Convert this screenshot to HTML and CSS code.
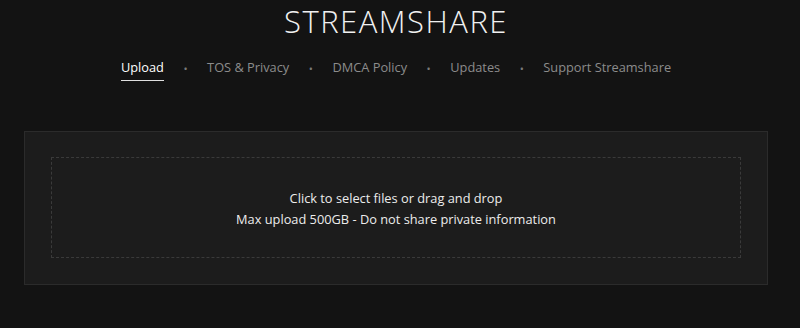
FILE: index.html
```html
<!DOCTYPE html>
<html lang="en">
  <head>
    <meta charset="UTF-8" />
    <meta name="viewport" content="width=device-width, initial-scale=1.0" />
    <title>Streamshare</title>
    <link rel="stylesheet" href="styles.css">
  </head>
  <body>
    <div class="page">
      <h1 class="title">STREAMSHARE</h1>
      <nav class="nav">
        <a href="#" class="active">Upload</a>
        <span class="dot">&bull;</span>
        <a href="#">TOS &amp; Privacy</a>
        <span class="dot">&bull;</span>
        <a href="#">DMCA Policy</a>
        <span class="dot">&bull;</span>
        <a href="#">Updates</a>
        <span class="dot">&bull;</span>
        <a href="#">Support Streamshare</a>
      </nav>
      <div class="upload-box">
        <div class="drop-zone">
          <p>Click to select files or drag and drop</p>
          <p>Max upload 500GB - Do not share private information</p>
        </div>
      </div>
    </div>
  </body>
</html>
```
FILE: styles.css
```css
* {
  box-sizing: border-box;
}
html,
body {
  margin: 0;
  padding: 0;
  background-color: #131313;
  font-family: "Open Sans", "Noto Sans", sans-serif;
  color: #e6e6e6;
}
.page {
  width: 792px;
  padding: 0 24px;
}
.title {
  margin: 0;
  padding-top: 2px;
  text-align: center;
  font-size: 31px;
  font-weight: 300;
  letter-spacing: 1.5px;
  line-height: 38px;
  color: #f0f0f0;
}
.nav {
  display: flex;
  justify-content: center;
  align-items: center;
  gap: 19.5px;
  margin-top: 17px;
  font-size: 12.8px;
  line-height: 20px;
}
.nav a {
  color: #8c8c8c;
  text-decoration: none;
  padding-bottom: 3px;
  border-bottom: 1px solid transparent;
}
.nav a.active {
  color: #ffffff;
  border-bottom-color: #e0e0e0;
}
.dot {
  color: #7a7a7a;
  font-size: 11px;
}
.upload-box {
  margin-top: 50px;
  background: #1c1c1c;
  border: 1px solid #2b2b2b;
  padding: 25px 26px 26px;
}
.drop-zone {
  height: 101px;
  padding-top: 2px;
  border: 1px dashed #3a3a3a;
  display: flex;
  flex-direction: column;
  justify-content: center;
  align-items: center;
  font-size: 12.8px;
  line-height: 21px;
  color: #ececec;
}
.drop-zone p {
  margin: 0;
}
```
